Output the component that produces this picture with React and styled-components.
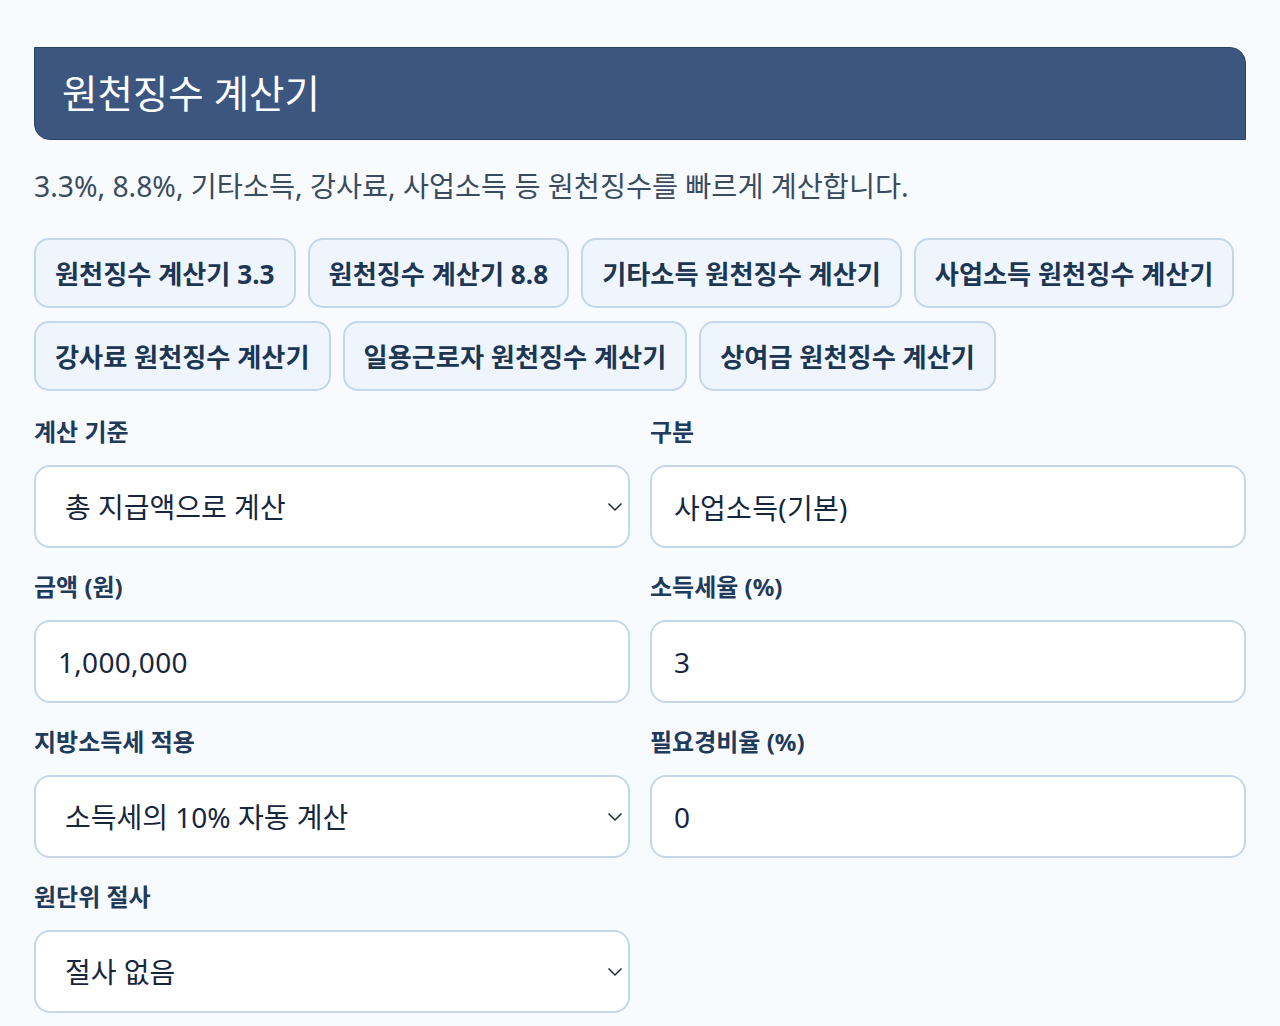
import styled, { createGlobalStyle } from 'styled-components';

const GlobalStyle = createGlobalStyle`
	body {
		margin: 0;
		background: #f8fbfe;
		font-family: 'Noto Sans', 'Noto Sans CJK KR', sans-serif;
	}
`;

const Page = styled.div`
	width: 1212px;
	padding: 47px 0 14px 34px;
`;

const Header = styled.h1`
	margin: 0;
	height: 93px;
	box-sizing: border-box;
	display: flex;
	align-items: center;
	padding: 0 0 6px 27px;
	background: #3c5680;
	border: 1px solid #2c4368;
	border-radius: 0 16px 0 16px;
	color: #ffffff;
	font-size: 38.5px;
	font-weight: 400;
`;

const Description = styled.p`
	margin: 28px 0 0;
	font-size: 28.3px;
	line-height: 36px;
	color: #3b4b60;
`;

const LinkList = styled.div`
	display: flex;
	flex-wrap: wrap;
	gap: 13px 12px;
	margin-top: 34px;
`;

const LinkButton = styled.a`
	display: inline-flex;
	align-items: center;
	height: 70px;
	box-sizing: border-box;
	padding: 0 19px;
	background: #eef5fd;
	border: 2px solid #c4d6eb;
	border-radius: 15px;
	color: #1d3654;
	font-size: 26.2px;
	font-weight: 700;
	text-decoration: none;
	white-space: nowrap;
`;

const FieldGrid = styled.div`
	display: grid;
	grid-template-columns: 1fr 1fr;
	gap: 24px 20px;
	margin-top: 26px;
`;

const Field = styled.label`
	display: flex;
	flex-direction: column;
	gap: 18px;
`;

const Label = styled.span`
	font-size: 24px;
	line-height: 30px;
	font-weight: 700;
	color: #1f3a5a;
`;

const controlBase = `
	width: 100%;
	height: 83px;
	box-sizing: border-box;
	background: #ffffff;
	border: 2px solid #c6d6e9;
	border-radius: 16px;
	font-family: 'Noto Sans', 'Noto Sans CJK KR', sans-serif;
	font-size: 28px;
	color: #16263d;
	outline: none;
`;

const TextInput = styled.input`
	${controlBase};
	padding: 0 22px;
	letter-spacing: 0.3px;
`;

const SelectWrap = styled.div`
	position: relative;
`;

const Select = styled.select`
	${controlBase};
	appearance: none;
	padding: 0 50px 0 29px;
`;

const Chevron = styled.svg`
	position: absolute;
	right: 7px;
	top: 50%;
	width: 16px;
	height: 10px;
	margin-top: -5px;
	pointer-events: none;
`;

const links = [
	'원천징수 계산기 3.3',
	'원천징수 계산기 8.8',
	'기타소득 원천징수 계산기',
	'사업소득 원천징수 계산기',
	'강사료 원천징수 계산기',
	'일용근로자 원천징수 계산기',
	'상여금 원천징수 계산기',
];

const SelectField = ({ label, options }) => (
	<Field>
		<Label>{label}</Label>
		<SelectWrap>
			<Select defaultValue={options[0]}>
				{options.map((o) => (
					<option key={o}>{o}</option>
				))}
			</Select>
			<Chevron viewBox="0 0 16 10">
				<path d="M1.5 1.5 L8 8 L14.5 1.5" fill="none" stroke="#1d2a3c" strokeWidth="1.5" />
			</Chevron>
		</SelectWrap>
	</Field>
);

const InputField = ({ label, value }) => (
	<Field>
		<Label>{label}</Label>
		<TextInput defaultValue={value} />
	</Field>
);

const App = () => (
	<>
		<GlobalStyle />
		<Page>
			<Header>원천징수 계산기</Header>
			<Description>3.3%, 8.8%, 기타소득, 강사료, 사업소득 등 원천징수를 빠르게 계산합니다.</Description>
			<LinkList>
				{links.map((l) => (
					<LinkButton key={l} href="#">
						{l}
					</LinkButton>
				))}
			</LinkList>
			<FieldGrid>
				<SelectField label="계산 기준" options={['총 지급액으로 계산', '실수령액으로 계산']} />
				<InputField label="구분" value="사업소득(기본)" />
				<InputField label="금액 (원)" value="1,000,000" />
				<InputField label="소득세율 (%)" value="3" />
				<SelectField label="지방소득세 적용" options={['소득세의 10% 자동 계산', '적용 안 함']} />
				<InputField label="필요경비율 (%)" value="0" />
				<SelectField label="원단위 절사" options={['절사 없음', '10원 단위 절사']} />
			</FieldGrid>
		</Page>
	</>
);

export default App;
